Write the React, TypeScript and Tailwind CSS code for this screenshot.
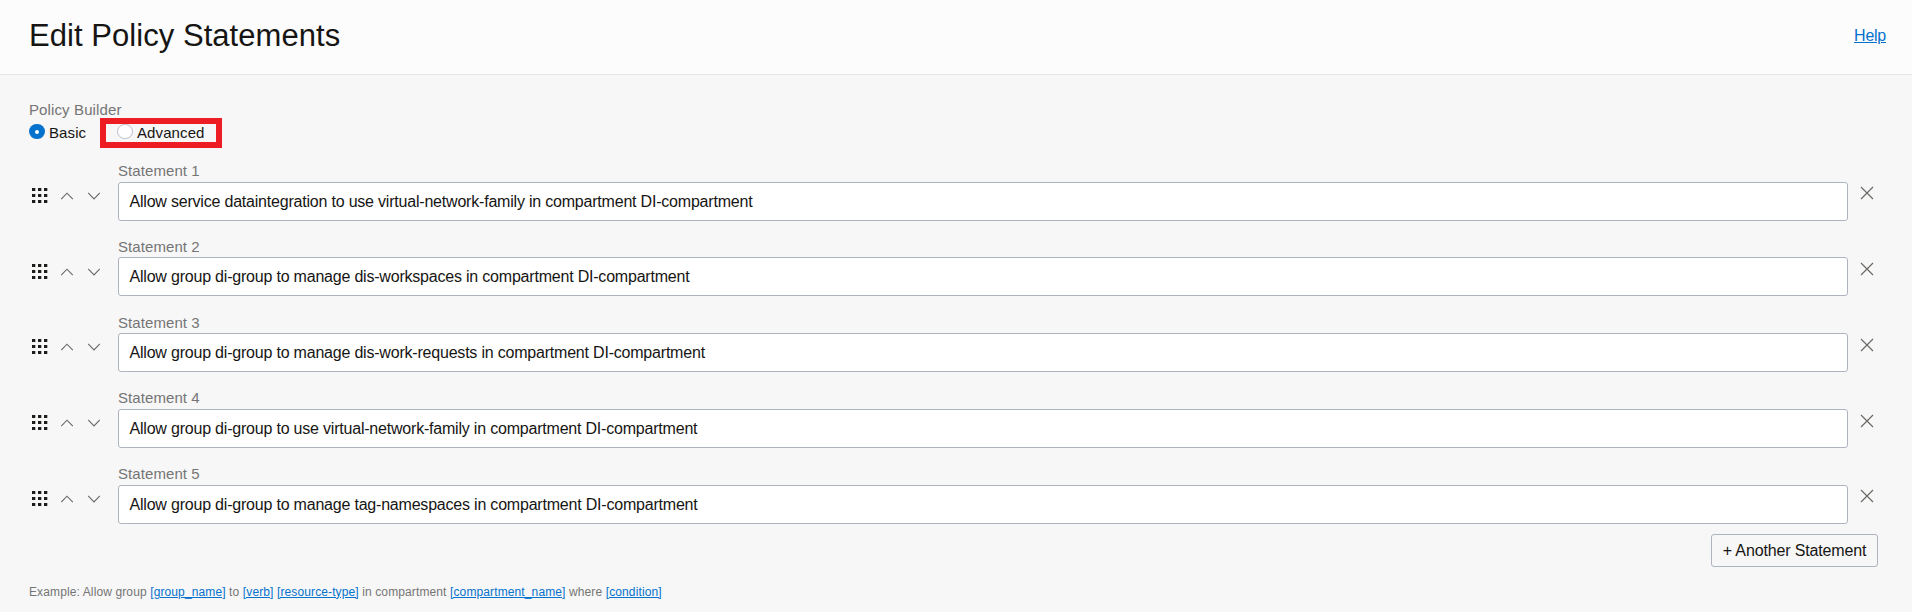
import { Fragment } from "react";

const statements = [
  "Allow service dataintegration to use virtual-network-family in compartment DI-compartment",
  "Allow group di-group to manage dis-workspaces in compartment DI-compartment",
  "Allow group di-group to manage dis-work-requests in compartment DI-compartment",
  "Allow group di-group to use virtual-network-family in compartment DI-compartment",
  "Allow group di-group to manage tag-namespaces in compartment DI-compartment",
];

const example = [
  ["Example: Allow group ", "[group_name]"],
  [" to ", "[verb]"],
  [" ", "[resource-type]"],
  [" in compartment ", "[compartment_name]"],
  [" where ", "[condition]"],
];

function DragHandle() {
  return (
    <svg className="mt-[25.9px] h-4 w-4 text-[#1d1c1a]" viewBox="0 0 16 16" fill="currentColor">
      {[0, 6, 12].map((y) =>
        [0, 6, 12].map((x) => <rect key={`${x}-${y}`} x={x} y={y} width="3.3" height="3" />)
      )}
    </svg>
  );
}

function Chevron({ d }: { d: string }) {
  return (
    <svg className="mt-[29.9px] h-2 w-3 text-[#6b6966]" viewBox="0 0 12 8" fill="none" stroke="currentColor" strokeWidth="1.1">
      <path d={d} />
    </svg>
  );
}

function StatementRow({ index, text }: { index: number; text: string }) {
  return (
    <div className="flex h-[75.75px] items-start">
      <div className="flex w-[86px] shrink-0">
        <DragHandle />
        <div className="ml-[13px] flex gap-[15px]">
          <Chevron d="M0.2 7.2 6 1.2 11.8 7.2" />
          <Chevron d="M0.2 1 6 7 11.8 1" />
        </div>
      </div>
      <div className="w-[1730px] shrink-0">
        <label className="block h-[19.7px] text-[15px] leading-[18px] tracking-[0.08px] text-[#757575]">Statement {index}</label>
        <div className="flex h-[39px] items-center rounded-[3px] border border-[#aeb4bf] bg-white px-[10.5px] pt-[0.8px] text-[16px] leading-5 tracking-[-0.205px] text-[#161513]">
          {text}
        </div>
      </div>
      <svg className="ml-[12px] mt-[24.3px] h-[14px] w-[14px] shrink-0 text-[#6b6966]" viewBox="0 0 14 14" fill="none" stroke="currentColor" strokeWidth="1.2">
        <path d="M1 1 13 13M13 1 1 13" />
      </svg>
    </div>
  );
}

export default function App() {
  return (
    <div className="h-[612px] w-[1912px] overflow-hidden bg-[#f7f7f7] font-['Liberation_Sans',Arial,sans-serif]">
      <header className="flex h-[75px] items-center justify-between border-b border-[#e4e4e4] bg-[#fcfcfc] pl-[29px] pr-[26px]">
        <h1 className="pb-[2px] text-[31px] leading-9 tracking-[0.05px] text-[#161513]">Edit Policy Statements</h1>
        <a className="pb-[3px] text-[16px] leading-5 tracking-[-0.25px] text-[#0572ce] underline" href="#">Help</a>
      </header>
      <main className="pl-[29px] pt-[26px]">
        <p className="h-[17px] text-[15px] leading-[18px] tracking-[0.12px] text-[#757575]">Policy Builder</p>
        <div className="flex h-[30px] text-[15px] leading-[18px] tracking-[0.1px] text-[#161513]">
          <label className="mt-[6px] flex h-[18px] w-[71px] gap-[4px]">
            <span className="flex h-[15px] w-4 items-center justify-center rounded-full bg-[#0572ce]">
              <span className="h-1 w-1 rounded-full bg-white" />
            </span>
            Basic
          </label>
          <label className="flex h-[30px] w-[122px] gap-[4px] border-6 border-[#ee1c23] pl-[11px]">
            <span className="h-[15px] w-4 rounded-full border border-[#b9bec6] bg-white" />
            Advanced
          </label>
        </div>
        <div className="flex flex-col pl-[3px] pt-[14px]">
          {statements.map((s, i) => (
            <StatementRow key={s} index={i + 1} text={s} />
          ))}
        </div>
        <div className="-mt-[7px] flex justify-end pr-[34px]">
          <button className="h-[33px] w-[167px] rounded-[3px] border border-[#aeb4bf] pt-px text-[16px] leading-5 tracking-[-0.15px] text-[#161513]">+ Another Statement</button>
        </div>
        <p className="mt-[17px] whitespace-pre text-[12px] leading-4 tracking-[0.117px] text-[#757575]">
          {example.map(([t, l]) => (
            <Fragment key={l}>
              {t}
              <a className="text-[#0572ce] underline" href="#">{l}</a>
            </Fragment>
          ))}
        </p>
      </main>
    </div>
  );
}
